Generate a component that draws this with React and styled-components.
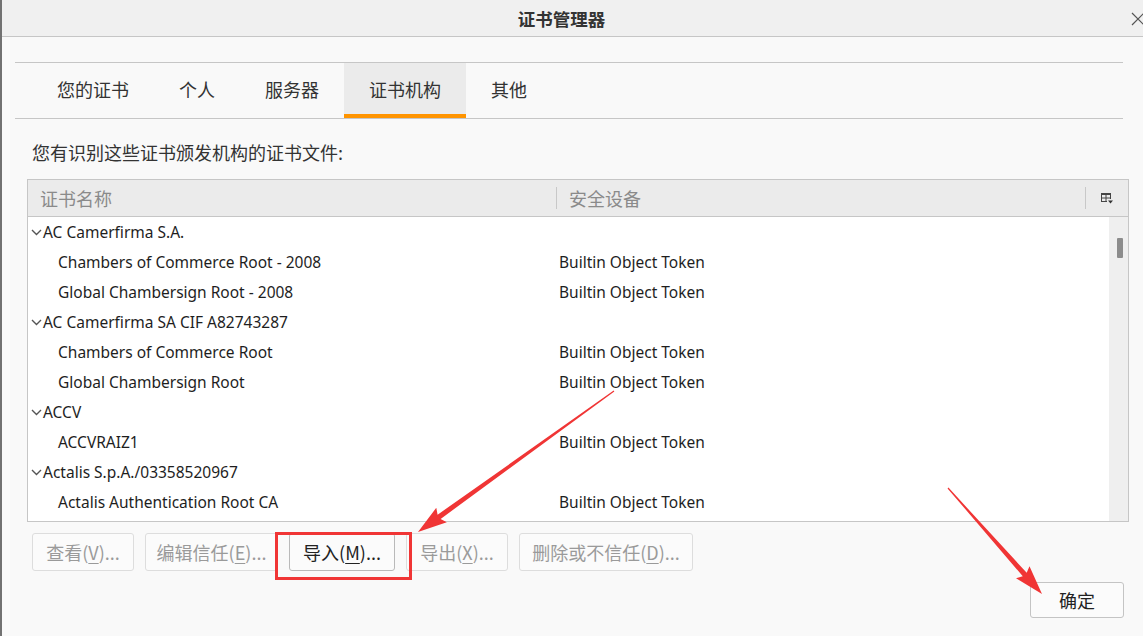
import React from "react";
import styled, { createGlobalStyle } from "styled-components";

const GlobalStyle = createGlobalStyle`
  html, body {
    margin: 0;
    padding: 0;
    background: #f9f9f9;
    font-family: "Noto Sans", "Noto Sans CJK SC", sans-serif;
    color: #2b2b2b;
  }
`;

const Window = styled.div`
  position: relative;
  width: 1143px;
  height: 636px;
  box-sizing: border-box;
  border-left: 2px solid #727272;
  background: #f9f9f9;
  display: flex;
  flex-direction: column;
  overflow: hidden;
`;

const TitleBar = styled.div`
  position: relative;
  height: 36px;
  flex: none;
  background: #f0f0f0;
  border-bottom: 1px solid #c6c6c6;
  display: flex;
  align-items: center;
  justify-content: center;
`;

const Title = styled.div`
  font-family: "Noto Sans CJK SC", sans-serif;
  font-weight: 700;
  font-size: 17.5px;
  color: #333;
  margin-right: 22px;
`;

const CloseBtn = styled.div`
  position: absolute;
  right: -3px;
  top: 10px;
  width: 16px;
  height: 16px;
`;

const TabStrip = styled.div`
  margin: 25px 20px 0 13px;
  padding-left: 17px;
  height: 55px;
  border-top: 1px solid #c6c6c6;
  border-bottom: 1px solid #c6c6c6;
  display: flex;
`;

const Tab = styled.div`
  padding: 0 25px 4px;
  display: flex;
  align-items: center;
  font-size: 18px;
  font-family: "Noto Sans CJK SC", sans-serif;
  color: #333;
  background: ${(p) => (p.$active ? "#ebebeb" : "transparent")};
  box-shadow: ${(p) => (p.$active ? "inset 0 -4px 0 #ff9400" : "none")};
`;

const Hint = styled.div`
  margin: 21px 0 0 30px;
  font-size: 18px;
  line-height: 24px;
  font-family: "Noto Sans CJK SC", sans-serif;
  color: #333;
`;

const Table = styled.div`
  margin: 15px 14px 0 25px;
  border: 1px solid #c6c6c6;
  display: flex;
  flex-direction: column;
`;

const HeadRow = styled.div`
  height: 36px;
  background: #ebebeb;
  border-bottom: 1px solid #c6c6c6;
  display: grid;
  grid-template-columns: 528px 1fr 43px;
  align-items: center;
`;

const HeadCell = styled.div`
  position: relative;
  height: 100%;
  display: flex;
  align-items: center;
  justify-content: ${(p) => (p.$center ? "center" : "flex-start")};
  padding-left: ${(p) => p.$pad || 0}px;
  font-family: "Noto Sans CJK SC", sans-serif;
  font-size: 18px;
  color: #8a8a8a;
  &::before {
    content: "";
    display: ${(p) => (p.$divider ? "block" : "none")};
    position: absolute;
    left: 0;
    top: 7px;
    bottom: 7px;
    width: 1px;
    background: #c8c8c8;
  }
`;

const Body = styled.div`
  height: 304px;
  display: flex;
  background: #fff;
`;

const List = styled.div`
  flex: 1;
  overflow: hidden;
`;

const Row = styled.div`
  height: 30px;
  display: grid;
  grid-template-columns: 528px 1fr;
  align-items: center;
  font-size: 15.5px;
  color: #1e1e1e;
`;

const NameCell = styled.div`
  display: flex;
  align-items: center;
  padding-left: ${(p) => (p.$group ? 2 : 30)}px;
  white-space: nowrap;
`;

const TokenCell = styled.div`
  padding-left: 3px;
  white-space: nowrap;
`;

const Chevron = styled.svg`
  width: 13px;
  height: 10px;
  flex: none;
`;

const Track = styled.div`
  width: 19px;
  flex: none;
  background: #efefef;
  padding-top: 21px;
  display: flex;
  justify-content: center;
  box-sizing: border-box;
`;

const Thumb = styled.div`
  width: 6px;
  height: 20px;
  background: #8c8c8c;
  border-radius: 1px;
  margin-left: 2px;
`;

const ButtonRow = styled.div`
  margin: 11px 0 0 30px;
  display: flex;
`;

const Button = styled.div`
  flex: none;
  width: ${(p) => p.$w}px;
  height: 38px;
  box-sizing: border-box;
  display: flex;
  align-items: center;
  justify-content: center;
  border-radius: 3px;
  background: #fbfbfb;
  border: 1px solid ${(p) => (p.$disabled ? "#dddddd" : "#b9b9b9")};
  color: ${(p) => (p.$disabled ? "#9a9a9a" : "#222")};
  font-family: "Noto Sans CJK SC", sans-serif;
  font-size: 18px;
  white-space: nowrap;
  margin-left: ${(p) => p.$ml || 0}px;
  u {
    text-decoration: underline;
    text-underline-offset: 3px;
  }
`;

const Footer = styled.div`
  margin: 11px 19px 0 0;
  display: flex;
  justify-content: flex-end;
`;

const OkButton = styled(Button)`
  height: 36px;
  border-color: #c4c4c4;
`;

const Highlight = styled.div`
  position: absolute;
  left: 273px;
  top: 532px;
  width: 137px;
  height: 48px;
  box-sizing: border-box;
  border: 3px solid #f03535;
`;

const Overlay = styled.svg`
  position: absolute;
  left: -2px;
  top: 0;
  pointer-events: none;
`;

const tabs = ["您的证书", "个人", "服务器", "证书机构", "其他"];

const rows = [
  { group: true, name: "AC Camerfirma S.A." },
  { name: "Chambers of Commerce Root - 2008", token: "Builtin Object Token" },
  { name: "Global Chambersign Root - 2008", token: "Builtin Object Token" },
  { group: true, name: "AC Camerfirma SA CIF A82743287" },
  { name: "Chambers of Commerce Root", token: "Builtin Object Token" },
  { name: "Global Chambersign Root", token: "Builtin Object Token" },
  { group: true, name: "ACCV" },
  { name: "ACCVRAIZ1", token: "Builtin Object Token" },
  { group: true, name: "Actalis S.p.A./03358520967" },
  { name: "Actalis Authentication Root CA", token: "Builtin Object Token" },
];

const actions = [
  { label: "查看", k: "V", w: 102, ml: 0, disabled: true },
  { label: "编辑信任", k: "E", w: 133, ml: 11, disabled: true },
  { label: "导入", k: "M", w: 106, ml: 11 },
  { label: "导出", k: "X", w: 102, ml: 11, disabled: true },
  { label: "删除或不信任", k: "D", w: 174, ml: 11, disabled: true },
];

// tapered annotation arrow, from tail to tip
function arrowPoints([x1, y1], [x2, y2]) {
  const len = Math.hypot(x2 - x1, y2 - y1);
  const dx = (x2 - x1) / len;
  const dy = (y2 - y1) / len;
  const nx = -dy;
  const ny = dx;
  const head = 26;
  const bx = x2 - dx * head;
  const by = y2 - dy * head;
  const p = (x, y, w) => [x + nx * w, y + ny * w];
  const pts = [
    p(x1, y1, 0.6),
    p(bx, by, 2.6),
    p(bx - dx * 3, by - dy * 3, 9),
    [x2, y2],
    p(bx - dx * 3, by - dy * 3, -9),
    p(bx, by, -2.6),
    p(x1, y1, -0.6),
  ];
  return pts.map((q) => q.join(",")).join(" ");
}

export default function App() {
  return (
    <>
      <GlobalStyle />
      <Window>
        <TitleBar>
          <Title>证书管理器</Title>
          <CloseBtn>
            <svg width="16" height="16" viewBox="0 0 16 16">
              <path d="M2 2 L14 14 M14 2 L2 14" stroke="#555" strokeWidth="1.2" fill="none" />
            </svg>
          </CloseBtn>
        </TitleBar>

        <TabStrip>
          {tabs.map((t) => (
            <Tab key={t} $active={t === "证书机构"}>
              {t}
            </Tab>
          ))}
        </TabStrip>

        <Hint>您有识别这些证书颁发机构的证书文件:</Hint>

        <Table>
          <HeadRow>
            <HeadCell $pad={12}>证书名称</HeadCell>
            <HeadCell $pad={13} $divider>
              安全设备
            </HeadCell>
            <HeadCell $center $divider>
              <svg width="14" height="13" viewBox="0 0 14 13">
                <rect x="1.5" y="1.5" width="9" height="8" fill="none" stroke="#444" strokeWidth="1" />
                <rect x="1" y="1" width="10" height="2" fill="#444" />
                <line x1="6" y1="3" x2="6" y2="10" stroke="#444" strokeWidth="1" />
                <line x1="1.5" y1="6" x2="10.5" y2="6" stroke="#444" strokeWidth="1" />
                <rect x="7" y="7" width="7" height="6" fill="#ebebeb" />
                <path d="M8 8.5 L13 8.5 L10.5 11.5 Z" fill="#333" />
              </svg>
            </HeadCell>
          </HeadRow>
          <Body>
            <List>
              {rows.map((r, i) => (
                <Row key={i}>
                  <NameCell $group={r.group}>
                    {r.group && (
                      <Chevron viewBox="0 0 13 10">
                        <path d="M2 3 L6.5 7.5 L11 3" stroke="#555" strokeWidth="1.4" fill="none" />
                      </Chevron>
                    )}
                    {r.name}
                  </NameCell>
                  <TokenCell>{r.token}</TokenCell>
                </Row>
              ))}
            </List>
            <Track>
              <Thumb />
            </Track>
          </Body>
        </Table>

        <ButtonRow>
          {actions.map((a) => (
            <Button key={a.k} $w={a.w} $ml={a.ml} $disabled={a.disabled}>
              {a.label}(<u>{a.k}</u>)...
            </Button>
          ))}
        </ButtonRow>

        <Footer>
          <OkButton $w={94}>确定</OkButton>
        </Footer>

        <Highlight />
        <Overlay width="1143" height="636" viewBox="0 0 1143 636">
          <polygon points={arrowPoints([614, 391], [418, 532])} fill="#f03535" />
          <polygon points={arrowPoints([948, 488], [1042, 594])} fill="#f03535" />
        </Overlay>
      </Window>
    </>
  );
}
